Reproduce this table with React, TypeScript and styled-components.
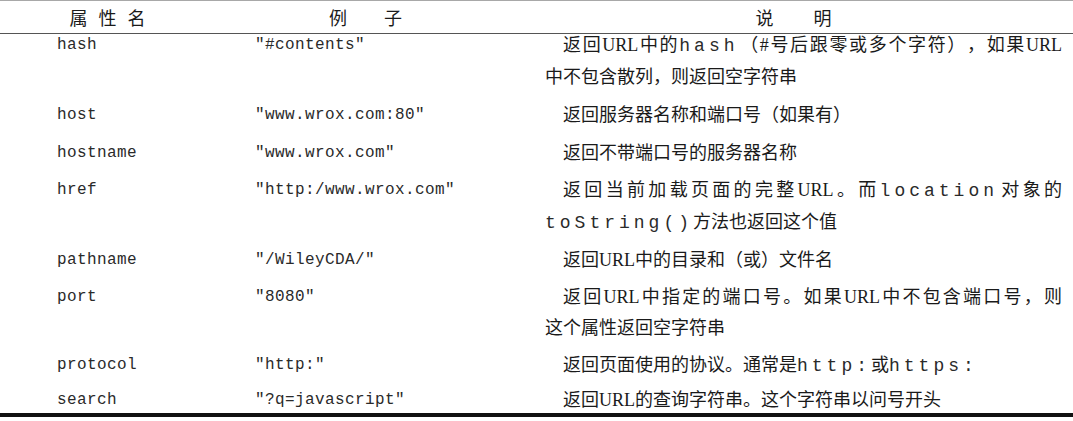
import React from "react";
import styled, { createGlobalStyle } from "styled-components";

const GlobalStyle = createGlobalStyle`
  html, body {
    margin: 0;
    padding: 0;
    background: #fff;
  }
`;

interface Row {
  name: string;
  example: string;
  lines: React.ReactNode[];
}

const Page = styled.div`
  width: 1073px;
  height: 421px;
  background: #fff;
  color: #1a1a1a;
  box-sizing: border-box;
`;

const Table = styled.div`
  border-top: 1px solid #a8a8a8;
  border-bottom: 4px solid #111;
`;

const HeadRow = styled.div`
  display: grid;
  grid-template-columns: 215px 315px 1fr;
  height: 32px;
  align-items: center;
  border-bottom: 1.5px solid #555;
`;

const HeadCell = styled.div<{ $spacing: number; $shift?: number }>`
  text-align: center;
  font-family: "Noto Sans CJK SC", sans-serif;
  font-size: 18px;
  letter-spacing: ${(p) => p.$spacing}px;
  padding-left: ${(p) => p.$spacing + (p.$shift || 0)}px;
  line-height: 32px;
`;

const Body = styled.div`
  margin-top: -4px;
`;

const BodyRow = styled.div`
  display: grid;
  grid-template-columns: 215px 315px 1fr;
  padding-bottom: 6px;
  line-height: 31px;

  &:nth-child(2),
  &:nth-child(3) {
    padding-top: 1px;
  }

  &:last-child {
    padding-bottom: 0;
    line-height: 25px;
  }
`;

const Mono = styled.div<{ $pad: number }>`
  font-family: "Liberation Mono", "Courier New", monospace;
  font-size: 16px;
  letter-spacing: 0.4px;
  padding-left: ${(p) => p.$pad}px;
  color: #2a2a2a;
`;

const Desc = styled.div`
  font-family: "Liberation Serif", "Noto Sans CJK SC", serif;
  font-size: 18px;
  padding: 0 11px 0 15px;
  text-spacing-trim: space-all;
`;

const Line = styled.div<{ $indent?: boolean; $justify?: boolean }>`
  text-indent: ${(p) => (p.$indent ? "18px" : "0")};
  text-align: ${(p) => (p.$justify ? "justify" : "left")};
  text-align-last: ${(p) => (p.$justify ? "justify" : "auto")};
  white-space: nowrap;
`;

const Code = styled.span`
  font-family: "Liberation Mono", "Courier New", monospace;
  font-size: 18px;
  letter-spacing: 4px;
  color: #2a2a2a;
`;

const rows: Row[] = [
  {
    name: "hash",
    example: "\"#contents\"",
    lines: [
      <>
        返回URL中的<Code>hash</Code>（#号后跟零或多个字符），如果URL
      </>,
      "中不包含散列，则返回空字符串",
    ],
  },
  { name: "host", example: "\"www.wrox.com:80\"", lines: ["返回服务器名称和端口号（如果有）"] },
  { name: "hostname", example: "\"www.wrox.com\"", lines: ["返回不带端口号的服务器名称"] },
  {
    name: "href",
    example: "\"http:/www.wrox.com\"",
    lines: [
      <>
        返回当前加载页面的完整URL。而<Code>location</Code>对象的
      </>,
      <>
        <Code>toString()</Code>方法也返回这个值
      </>,
    ],
  },
  { name: "pathname", example: "\"/WileyCDA/\"", lines: ["返回URL中的目录和（或）文件名"] },
  {
    name: "port",
    example: "\"8080\"",
    lines: ["返回URL中指定的端口号。如果URL中不包含端口号，则", "这个属性返回空字符串"],
  },
  {
    name: "protocol",
    example: "\"http:\"",
    lines: [
      <>
        返回页面使用的协议。通常是<Code>http:</Code>或<Code>https:</Code>
      </>,
    ],
  },
  { name: "search", example: "\"?q=javascript\"", lines: ["返回URL的查询字符串。这个字符串以问号开头"] },
];

export default function App() {
  return (
    <>
      <GlobalStyle />
      <Page>
        <Table>
          <HeadRow>
            <HeadCell $spacing={11}>属性名</HeadCell>
            <HeadCell $spacing={37} $shift={-14}>例子</HeadCell>
            <HeadCell $spacing={40} $shift={-16}>说明</HeadCell>
          </HeadRow>
          <Body>
            {rows.map((r) => (
              <BodyRow key={r.name}>
                <Mono $pad={57}>{r.name}</Mono>
                <Mono $pad={40}>{r.example}</Mono>
                <Desc>
                  {r.lines.map((l, i) => (
                    <Line key={i} $indent={i === 0} $justify={i < r.lines.length - 1}>
                      {l}
                    </Line>
                  ))}
                </Desc>
              </BodyRow>
            ))}
          </Body>
        </Table>
      </Page>
    </>
  );
}
